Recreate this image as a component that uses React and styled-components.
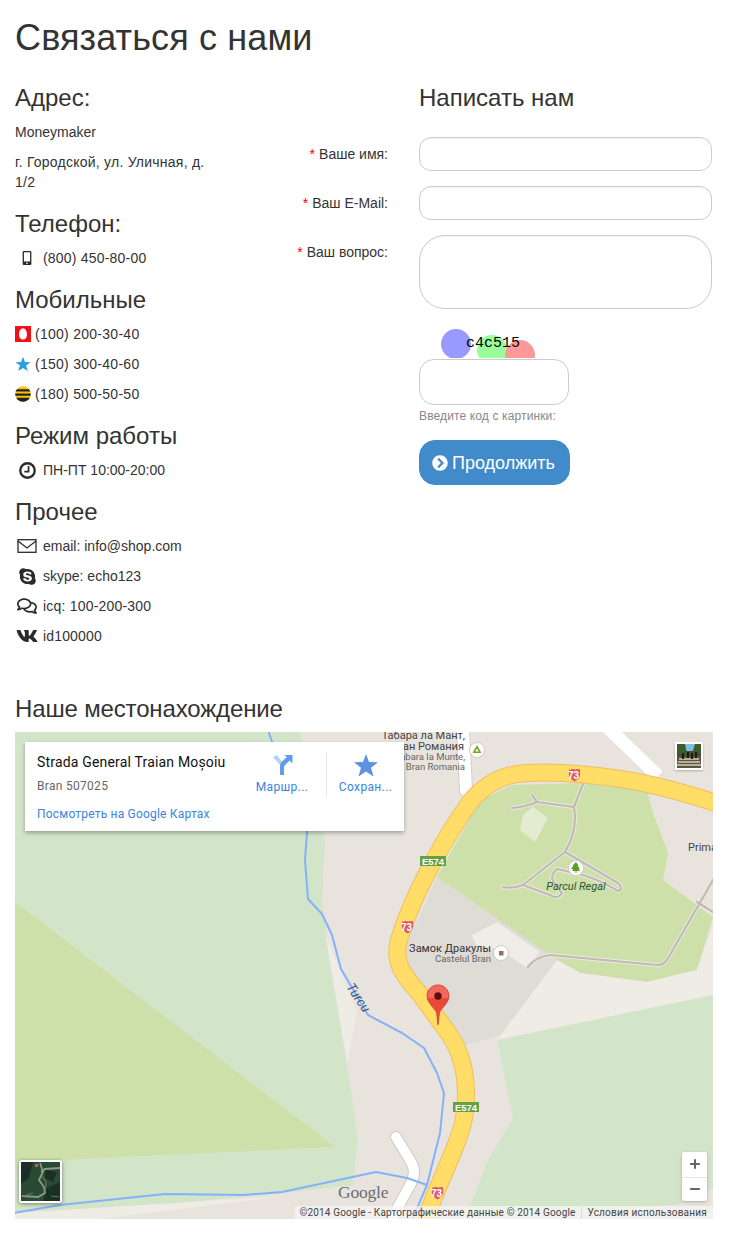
import React from "react";
import styled, { createGlobalStyle } from "styled-components";
import { FaChevronCircleRight, FaMobileAlt, FaRegComments, FaSkype, FaVk } from "react-icons/fa";
import { Minus, Plus } from "lucide-react";

const Global = createGlobalStyle`
  html, body { margin: 0; padding: 0; background: #fff; }
  body { font-family: "Liberation Sans", Arial, sans-serif; font-size: 14px; line-height: 20px; color: #333; }
  * { box-sizing: border-box; }
`;

const Page = styled.div`
  width: 733px;
  padding: 18px 20px 19px 15px;
`;
const Title = styled.h1`
  margin: 0 0 27px;
  font-size: 36px;
  line-height: 40px;
  font-weight: 400;
  letter-spacing: 0.13px;
  color: #333;
`;
const Columns = styled.div`
  display: flex;
`;
const Info = styled.div`
  width: 205px;
  flex: none;
`;
const Heading = styled.h2`
  margin: 0 0 11px;
  font-size: 24px;
  line-height: 26px;
  font-weight: 400;
  color: #333;
  * + & { margin-top: 19px; }
`;
const Para = styled.p`
  margin: 0 0 10px;
  letter-spacing: ${p => p.$spread ?? 0}px;
`;
const ContactList = styled.div`
  display: flex;
  flex-direction: column;
  gap: 10px;
`;
const Contact = styled.div`
  display: flex;
  align-items: center;
  height: 20px;
  letter-spacing: ${p => p.$spread ?? 0}px;
`;
const IconCell = styled.span`
  width: 28px;
  flex: none;
  display: flex;
  align-items: center;
  justify-content: center;
  padding-right: 4px;
  color: #2b2b2b;
`;
const OperatorCell = styled.span`
  width: 20px;
  flex: none;
  display: flex;
  align-items: center;
`;
const FormArea = styled.form`
  flex: 1;
  display: flex;
  flex-direction: column;
  padding-right: 1px;
`;
const FieldRow = styled.div`
  display: grid;
  grid-template-columns: 1fr 293px;
  column-gap: 31px;
  margin-bottom: ${p => p.$gap ?? 15}px;
`;
const FormTitle = styled.h2`
  grid-column: 2;
  margin: 0;
  font-size: 24px;
  line-height: 26px;
  font-weight: 400;
  color: #333;
`;
const Label = styled.label`
  text-align: right;
  padding-top: 7px;
  color: #333;
`;
const Star = styled.span`
  color: #f00;
  margin-right: 4px;
`;
const TextInput = styled.input`
  display: block;
  width: 100%;
  height: 34px;
  border: 1px solid #ccc;
  border-radius: 12px;
  background: #fff;
  box-shadow: inset 0 1px 1px rgba(0, 0, 0, 0.05);
  outline: none;
`;
const TextArea = styled.textarea`
  display: block;
  width: 100%;
  height: 74px;
  border: 1px solid #ccc;
  border-radius: 26px;
  background: #fff;
  box-shadow: inset 0 1px 1px rgba(0, 0, 0, 0.05);
  resize: none;
  outline: none;
`;
const CaptchaCol = styled.div`
  grid-column: 2;
  display: flex;
  flex-direction: column;
  align-items: flex-start;
`;
const CaptchaPicture = styled.svg`
  display: block;
  margin-bottom: 1px;
`;
const CaptchaInput = styled.input`
  display: block;
  width: 150px;
  height: 46px;
  border: 1px solid #ccc;
  border-radius: 15px;
  background: #fff;
  outline: none;
`;
const Help = styled.div`
  margin-top: 3px;
  font-size: 12px;
  line-height: 17px;
  letter-spacing: 0.13px;
  color: #888;
`;
const Submit = styled.button`
  margin-top: 15px;
  width: 151px;
  height: 45px;
  border: 1px solid #428bca;
  border-radius: 16px;
  background: #428bca;
  color: #fff;
  font: 18px/24px "Liberation Sans", Arial, sans-serif;
  display: flex;
  align-items: center;
  gap: 4px;
  padding: 0 0 0 12px;
`;
const MapHeading = styled.h2`
  margin: 50px 0 10px;
  font-size: 24px;
  line-height: 26px;
  font-weight: 400;
  letter-spacing: -0.15px;
  color: #333;
`;
const MapFrame = styled.div`
  position: relative;
  width: 698px;
  height: 487px;
  overflow: hidden;
  font-family: Roboto, "Liberation Sans", sans-serif;
  background: #e8e4dd;
`;
const MapDrawing = styled.svg`
  display: block;
`;
const PlaceCard = styled.div`
  position: absolute;
  left: 10px;
  top: 10px;
  width: 379px;
  height: 89px;
  background: #fff;
  box-shadow: 0 2px 4px rgba(0, 0, 0, 0.3);
  display: flex;
  padding: 10px 0 10px 12px;
  justify-content: space-between;
`;
const PlaceText = styled.div`
  display: flex;
  flex-direction: column;
`;
const PlaceName = styled.div`
  font-size: 14px;
  line-height: 20px;
  letter-spacing: 0.18px;
  color: #111;
`;
const PlaceCity = styled.div`
  margin-top: 6px;
  font-size: 12px;
  line-height: 16px;
  letter-spacing: 0.3px;
  color: #666;
`;
const PlaceLink = styled.div`
  margin-top: 12px;
  font-size: 12px;
  line-height: 16px;
  letter-spacing: 0.2px;
  color: #3a84df;
`;
const PlaceActions = styled.div`
  display: flex;
`;
const PlaceAction = styled.div`
  width: ${p => p.$width}px;
  display: flex;
  flex-direction: column;
  align-items: center;
  gap: 2px;
  font-size: 12px;
  line-height: 16px;
  letter-spacing: 0.35px;
  color: #3a84df;
  white-space: nowrap;
  height: 44px;
  padding-top: 1px;
  & + & { border-left: 1px solid #e6e6e6; }
`;
const ActionIcon = styled.svg`
  display: block;
  height: 24px;
`;
const PhotoThumb = styled.div`
  position: absolute;
  right: 10px;
  top: 10px;
  width: 28px;
  height: 28px;
  border: 2px solid #fff;
  box-shadow: 0 1px 2px rgba(0, 0, 0, 0.25);
  background: #fff;
`;
const SatelliteThumb = styled.div`
  position: absolute;
  left: 4px;
  top: 428px;
  width: 43px;
  height: 43px;
  border: 2px solid #fff;
  border-radius: 3px;
  box-shadow: 0 1px 4px rgba(0, 0, 0, 0.45);
  background: #24402c;
`;
const ZoomBox = styled.div`
  position: absolute;
  right: 6px;
  top: 420px;
  width: 25px;
  height: 49px;
  background: #fff;
  border-radius: 2px;
  box-shadow: 0 1px 3px rgba(0, 0, 0, 0.25);
  display: flex;
  flex-direction: column;
`;
const ZoomButton = styled.div`
  height: 24.5px;
  display: flex;
  align-items: center;
  justify-content: center;
  color: #666;
  & + & { border-top: 1px solid #e6e6e6; }
`;
const Attribution = styled.div`
  position: absolute;
  right: 0;
  bottom: 0;
  height: 13px;
  display: flex;
  align-items: center;
  font-size: 10px;
  line-height: 13px;
  color: #444;
  white-space: nowrap;
`;
const AttributionPart = styled.span`
  background: rgba(245, 245, 245, 0.75);
  padding: 0 6px 0 5px;
  letter-spacing: ${p => p.$spread}px;
  & + & { border-left: 1px solid #dcdcdc; }
`;

const Mts = () => (
  <svg width="16" height="16" viewBox="0 0 16 16">
    <rect width="16" height="16" fill="#f40d15" />
    <path d="M8 2.2c2.6 0 4 3.2 4 6.2 0 3-1.7 5.2-4 5.2s-4-2.200-4-5.200c0-3 1.400-6.200 4-6.200z" fill="#fff" />
  </svg>
);
const Kyivstar = () => (
  <svg width="16" height="16" viewBox="0 0 16 16">
    <path d="M8 .8l1.900 5.300 5.700.100-4.500 3.400 1.700 5.500L8 11.900l-4.800 3.200 1.700-5.500L.4 6.200l5.700-.100z" fill="#2a9fdc" />
  </svg>
);
const Beeline = () => (
  <svg width="16" height="16" viewBox="0 0 16 16">
    <defs><clipPath id="bee"><circle cx="8" cy="8" r="7.800" /></clipPath></defs>
    <g clipPath="url(#bee)">
      <rect width="16" height="16" fill="#fcc60f" />
      <path d="M0 3.200h16v2.300H0zM0 7.400h16v2.300H0zM0 11.700h16V16H0z" fill="#222" />
    </g>
  </svg>
);
const ClockIcon = () => (
  <svg width="17" height="17" viewBox="0 0 16 16" fill="none" stroke="currentColor">
    <circle cx="8" cy="8" r="6.800" strokeWidth="2.200" />
    <path d="M9 3.800V9H5" strokeWidth="1.600" />
  </svg>
);
const MailIcon = () => (
  <svg width="20" height="14" viewBox="0 0 20 14" fill="none" stroke="currentColor" strokeWidth="1.300">
    <rect x="1" y=".7" width="18" height="12.600" />
    <path d="M1 2l9 7 9-7" />
  </svg>
);
const Shield = ({ x, y }) => (
  <g>
    <path d={`M${x} ${y}h2l1.200 .8 1.800-.8h2l1.200 .8 1.800-.8h2.500c1 1.500 1 7-.500 9-1 1.300-3 2.500-4.500 3.500-1.500-1-3.500-2.200-4.500-3.500-1.500-2-1.500-7.500-.500-9z`} fill="#dd5b62" />
    <text x={x + 6.500} y={y + 9.500} fontFamily="Liberation Sans" fontWeight="700" fontSize="10" fill="#fff" textAnchor="middle">73</text>
  </g>
);
const RoadSign = ({ x, y }) => (
  <g>
    <rect x={x} y={y} width="26" height="10" fill="#679f45" />
    <text x={x + 13} y={y + 8.500} fontFamily="Liberation Sans" fontWeight="700" fontSize="9.500" fill="#fff" textAnchor="middle">E574</text>
  </g>
);
const Poi = ({ x, y, children }) => (
  <g>
    <circle cx={x} cy={y} r="7.500" fill="#fff" stroke="#d0ccc4" />
    {children}
  </g>
);

const pathStyle = { fill: "none", strokeLinecap: "round", strokeLinejoin: "round" };
const parkPaths = [
  "M583 784L574 807Q578 830 565 852L523 885Q512 889 503 887",
  "M574 807L537 802L532 795M537 802Q525 807 512 808",
  "M565 852L618 883Q624 889 618 891Q600 880 583 875L557 869Q550 875 553 881L562 893Q558 900 550 895L523 885",
  "M528 967Q535 957 550 955L657 965Q662 966 667 960L713 880",
  "M697 902L713 912",
];
const rivers = [
  "M268 730L285 780L307 832L305 860L308 899L322 914L332 935L341 969L368 1015L402 1033L424 1048L437 1073L444 1093L440 1133L427 1185L412 1220",
  "M427 1185L407 1178L376 1172L282 1192L243 1195L165 1194L60 1205L13 1213",
];
const road = "M716 803C660 785 620 776 563 773C520 771 495 772 470 802C450 830 414 890 399 940C393 962 403 975 419 993L444 1027C458 1045 466 1065 466 1095C466 1120 460 1135 451 1157L437 1190L424 1222";

const MapPicture = () => (
  <MapDrawing width="698" height="487" viewBox="15 732 698 487">
    <rect x="15" y="732" width="698" height="487" fill="#e8e4dd" />
    <polygon points="15,732 300,732 325,840 322,903 347,1063 358,1140 353,1185 283,1193 177,1203 15,1213" fill="#d3e5c8" />
    <polygon points="15,902 335,1147 60,1160 15,1163" fill="#cde0a9" />
    <polygon points="325,933 357,1013 347,1063" fill="#efece5" />
    <polygon points="15,1213 177,1203 283,1196 100,1219 15,1219" fill="#efece5" />
    <polygon points="437,877 557,960 500,1035 465,1045 410,975 404,950" fill="#dfdbd5" />
    <polygon points="480,800 513,785 583,783 647,790 653,813 668,853 663,880 713,917 697,970 647,982 580,973 557,960 437,877" fill="#cde0a9" />
    <polygon points="557,960 580,973 647,982 697,970 713,925 713,995 497,1040 515,1017" fill="#efece5" />
    <polygon points="497,1040 713,995 713,1188 677,1205 465,1219 488,1160 513,1118" fill="#d3e5c8" />
    <polygon points="533,807 548,818 535,842 520,830 523,815" fill="#e3ecd0" />
    <polygon points="472,935 497,922 540,952 527,968 500,950 476,945" fill="#f0ede8" />
    <path d="M463 728L466 790" stroke="#d4cfc6" strokeWidth="14" {...pathStyle} />
    <path d="M463 728L466 790" stroke="#fff" strokeWidth="12" {...pathStyle} />
    <path d="M606 726L658 776" stroke="#fff" strokeWidth="13" fill="none" />
    <path d="M396 1137L410 1160Q418 1172 410 1185L390 1222" stroke="#cfcac1" strokeWidth="12" {...pathStyle} />
    <path d="M396 1137L410 1160Q418 1172 410 1185L390 1222" stroke="#fff" strokeWidth="10" {...pathStyle} />
    {parkPaths.map(d => <path key={d} d={d} stroke="#ece9e2" strokeWidth="4" {...pathStyle} />)}
    {parkPaths.map(d => <path key={`${d}-c`} d={d} stroke="#bfbbb3" strokeWidth="2.200" {...pathStyle} />)}
    {rivers.map(d => <path key={d} d={d} stroke="#84b1fb" strokeWidth="2" {...pathStyle} />)}
    <path d={road} stroke="#efbd62" strokeWidth="18" fill="none" />
    <path d={road} stroke="#ffdd67" strokeWidth="16" fill="none" />
    <RoadSign x={420} y={856} />
    <RoadSign x={453} y={1102} />
    <Shield x={567} y={769} />
    <Shield x={400} y={921} />
    <Shield x={430} y={1187} />
    <g fontFamily="Roboto, Liberation Sans" fontSize="11" textAnchor="end" fill="#444">
      <text x="465" y="739">Табара ла Мант,</text>
      <text x="464" y="750">Бран Романия</text>
      <text x="465" y="760" fontSize="9.500" fill="#666">Tabara la Munte,</text>
      <text x="465" y="770" fontSize="9.500" fill="#666">Bran Romania</text>
      <text x="491" y="952" fontSize="11" fill="#333">Замок Дракулы</text>
      <text x="491" y="962" fontSize="9.500" fill="#666">Castelul Bran</text>
    </g>
    <text x="688" y="851" fontFamily="Roboto, Liberation Sans" fontSize="11" fill="#444">Prima</text>
    <text x="576" y="890" fontFamily="Roboto, Liberation Sans" fontSize="11" fontStyle="italic" fill="#2f5233" textAnchor="middle">Parcul Regal</text>
    <text x="0" y="0" transform="translate(346 987) rotate(56)" fontFamily="Roboto, Liberation Sans" fontSize="13" fontStyle="italic" fill="#3a5a80">Turcu</text>
    <Poi x={477} y={750}><path d="M477 745l4.500 8h-9zM477 748.500l-1.700 3h3.400z" fill="#7aa821" fillRule="evenodd" /></Poi>
    <Poi x={576} y={868}><path d="M576 862l2.500 3.500h-1l2.500 3.500h-1.500l1.500 2h-3.500v2h-1v-2h-3.500l1.500-2H571l2.500-3.500h-1z" fill="#5d9e20" /></Poi>
    <Poi x={501} y={953}><rect x="499" y="951" width="4.500" height="4.500" fill="#9a7052" /></Poi>
    <text x="338" y="1198" fontFamily="Liberation Serif" fontSize="17.500" letterSpacing="-.2" fill="#6d6d6d">Google</text>
    <g>
      <path d="M438 985c-6 0-11 4.800-11 10.800 0 7.500 8.500 13 9.600 17l1.400 12 1.400-12c1.100-4 9.600-9.500 9.600-17 0-6-5-10.800-11-10.800z" fill="#f4675c" stroke="#c9392c" strokeWidth=".800" />
      <path d="M427.200 998c1.500 6 8.500 11 9.400 15l1.400 12 1.400-12c.9-4 7.900-9 9.400-15z" fill="#e9493b" />
      <circle cx="438" cy="996" r="3.700" fill="#5a1010" />
    </g>
  </MapDrawing>
);

const DirectionsIcon = () => (
  <ActionIcon viewBox="0 0 24 24" width="24">
    <path d="M3 4l4-2 6.500 9v11H10V12z" fill="#b6d1f3" />
    <path d="M10 22V13c0-2 1-3 2-4.500L17 4l-3-2h8.500v8.500l-2.800-3-5 5c-.5.500-.7 1-.7 2V22z" fill="#5f9de8" />
  </ActionIcon>
);
const StarIcon = () => (
  <ActionIcon viewBox="0 0 24 24" width="24">
    <path d="M12 1l3 8 9 .300-7 5.500 2.500 8.700L12 18.500 4.500 23.500 7 14.800 0 9.300 9 9z" fill="#5c93e3" />
  </ActionIcon>
);

const PhotoPicture = () => (
  <svg width="24" height="24" viewBox="0 0 24 24" style={{ display: "block" }}>
    <rect width="24" height="24" fill="#4c4a34" />
    <path d="M8 0h10v7H8z" fill="#7cc0e0" />
    <path d="M0 0h8l2 10H0zM24 0h-6l-3 10h9z" fill="#3f5a2c" />
    <path d="M0 12h24v12H0z" fill="#5a5446" />
    <path d="M2 15h20M1 18h22M0 21h24" stroke="#d8d0b0" strokeWidth="1.400" />
    <path d="M6 9v6M11 8v6M15 9v6M19 8v6" stroke="#17150f" strokeWidth="1.800" />
  </svg>
);
const SatellitePicture = () => (
  <svg width="39" height="39" viewBox="0 0 39 39" style={{ display: "block" }}>
    <rect width="39" height="39" fill="#2b4a34" />
    <path d="M0 0h12l-4 16L0 22zM26 26l13-6v19H22zM24 8l12 2-4 10-8-4z" fill="#1b3024" />
    <path d="M19 1l3 9-4 8 5 7 1 6-7 4-16-1M39 6L24 7l-4 3" stroke="#8d9a82" strokeWidth="1.800" fill="none" />
    <path d="M21 14l4 6-1 9M2 34l10-3M30 34l8 1" stroke="#65755f" strokeWidth="1.200" fill="none" />
    <path d="M14 2h3v3h-3z" fill="#c05b72" />
  </svg>
);

const contactsExtra = [
  { icon: <MailIcon />, text: "email: info@shop.com" },
  { icon: <FaSkype size={19} />, text: "skype: echo123" },
  { icon: <FaRegComments size={20} />, text: "icq: 100-200-300", spread: 0.2 },
  { icon: <FaVk size={22} />, text: "id100000", spread: 0.15 },
];
const operators = [
  { icon: <Mts />, text: "(100) 200-30-40" },
  { icon: <Kyivstar />, text: "(150) 300-40-60" },
  { icon: <Beeline />, text: "(180) 500-50-50" },
];

export default function App() {
  return (
    <Page>
      <Global />
      <Title>Связаться с нами</Title>
      <Columns>
        <Info>
          <Heading>Адрес:</Heading>
          <Para>Moneymaker</Para>
          <Para $spread={0.24}>г. Городской, ул. Уличная, д. 1/2</Para>
          <Heading>Телефон:</Heading>
          <ContactList>
            <Contact $spread={0.2}><IconCell><FaMobileAlt size={14} /></IconCell>(800) 450-80-00</Contact>
          </ContactList>
          <Heading>Мобильные</Heading>
          <ContactList>
            {operators.map(o => (
              <Contact key={o.text} $spread={0.27}><OperatorCell>{o.icon}</OperatorCell>{o.text}</Contact>
            ))}
          </ContactList>
          <Heading>Режим работы</Heading>
          <ContactList>
            <Contact><IconCell><ClockIcon /></IconCell>ПН-ПТ 10:00-20:00</Contact>
          </ContactList>
          <Heading>Прочее</Heading>
          <ContactList>
            {contactsExtra.map(c => (
              <Contact key={c.text} $spread={c.spread}><IconCell>{c.icon}</IconCell>{c.text}</Contact>
            ))}
          </ContactList>
        </Info>
        <FormArea onSubmit={e => e.preventDefault()}>
          <FieldRow $gap={26}><FormTitle>Написать нам</FormTitle></FieldRow>
          <FieldRow>
            <Label><Star>*</Star>Ваше имя:</Label>
            <TextInput type="text" />
          </FieldRow>
          <FieldRow>
            <Label><Star>*</Star>Ваш E-Mail:</Label>
            <TextInput type="text" />
          </FieldRow>
          <FieldRow $gap={18}>
            <Label><Star>*</Star>Ваш вопрос:</Label>
            <TextArea />
          </FieldRow>
          <FieldRow $gap={0}>
            <CaptchaCol>
              <CaptchaPicture width="150" height="31" viewBox="0 0 150 31">
                <rect width="150" height="31" fill="#fff" />
                <circle cx="37" cy="17" r="15" fill="#9999ff" />
                <circle cx="73" cy="23" r="15" fill="#99ff99" />
                <circle cx="101" cy="28" r="15" fill="#ff9999" />
                <text x="47" y="20" fontFamily="Liberation Mono, monospace" fontSize="15" fill="#000">c4c515</text>
              </CaptchaPicture>
              <CaptchaInput type="text" />
              <Help>Введите код с картинки:</Help>
              <Submit type="submit"><FaChevronCircleRight size={16} />Продолжить</Submit>
            </CaptchaCol>
          </FieldRow>
        </FormArea>
      </Columns>
      <MapHeading>Наше местонахождение</MapHeading>
      <MapFrame>
        <MapPicture />
        <PlaceCard>
          <PlaceText>
            <PlaceName>Strada General Traian Moșoiu</PlaceName>
            <PlaceCity>Bran 507025</PlaceCity>
            <PlaceLink>Посмотреть на Google Картах</PlaceLink>
          </PlaceText>
          <PlaceActions>
            <PlaceAction $width={88}><DirectionsIcon />Маршр...</PlaceAction>
            <PlaceAction $width={78}><StarIcon />Сохран...</PlaceAction>
          </PlaceActions>
        </PlaceCard>
        <PhotoThumb><PhotoPicture /></PhotoThumb>
        <SatelliteThumb><SatellitePicture /></SatelliteThumb>
        <ZoomBox>
          <ZoomButton><Plus size={14} strokeWidth={3.500} /></ZoomButton>
          <ZoomButton><Minus size={14} strokeWidth={3.500} /></ZoomButton>
        </ZoomBox>
        <Attribution>
          <AttributionPart $spread={0.15}>©2014 Google - Картографические данные © 2014 Google</AttributionPart>
          <AttributionPart $spread={0.23}>Условия использования</AttributionPart>
        </Attribution>
      </MapFrame>
    </Page>
  );
}
